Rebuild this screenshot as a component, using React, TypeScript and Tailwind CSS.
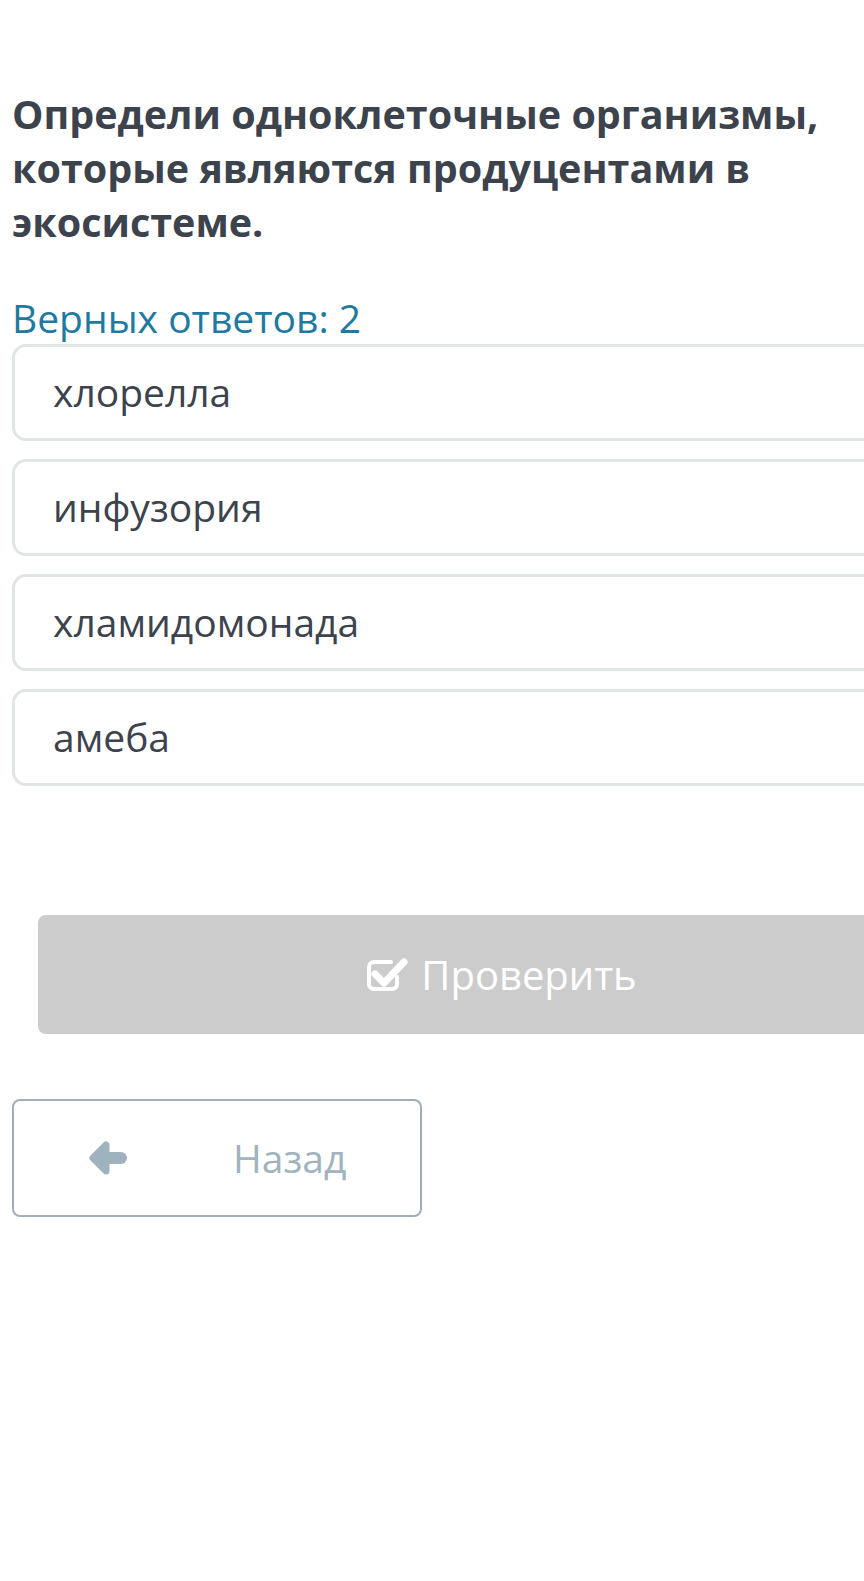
import React from "react";

const CheckIcon = () => (
  <svg width="42" height="34" viewBox="0 0 42 34" fill="none">
    <path d="M30 19v7a5 5 0 0 1-5 5H7a5 5 0 0 1-5-5V9a5 5 0 0 1 5-5h17" stroke="#ffffff" strokeWidth="4" strokeLinecap="round" />
    <path d="M8 16l9 9L37 4" stroke="#ffffff" strokeWidth="7" strokeLinecap="round" strokeLinejoin="round" />
  </svg>
);

const ArrowLeft = () => (
  <svg width="42" height="36" viewBox="0 0 42 36" fill="#9fb3bf">
    <path d="M6 18L19 5L19 31Z" stroke="#9fb3bf" strokeWidth="7" strokeLinejoin="round" />
    <rect x="14" y="12" width="26" height="12" rx="6" />
  </svg>
);

export default function App() {
  const options = ["хлорелла", "инфузория", "хламидомонада", "амеба"];
  return (
    <div className="w-[864px] h-[1581px] overflow-hidden bg-white" style={{ fontFamily: '"Open Sans", "Noto Sans", sans-serif' }}>
      <div className="w-[1004px] px-[12px] pt-[87px]">
        <h1 className="text-[39.5px] leading-[54px] font-bold text-[#3c434d] w-[830px]">
          Определи одноклеточные организмы, которые являются продуцентами в экосистеме.
        </h1>
        <div className="mt-[46px] text-[39px] leading-[46px] text-[#1e7aa0]">Верных ответов: 2</div>
        <div className="flex flex-col gap-[18px] mt-[3px]">
          {options.map((o) => (
            <div key={o} className="h-[97px] rounded-[14px] border-[3px] border-[#e2e5e5] flex items-center pl-[38px] text-[39px] text-[#3c434d]">
              {o}
            </div>
          ))}
        </div>
        <div className="mt-[129px] ml-[26px] mr-[26px] h-[119px] rounded-[8px] bg-[#cccccc] flex items-center justify-center gap-[12px] text-[40px] text-white">
          <CheckIcon />
          <span>Проверить</span>
        </div>
        <div className="mt-[65px] w-[410px] h-[118px] rounded-[8px] border-2 border-[#9fb0b9] flex items-center text-[39px] text-[#a0b3be]">
          <div className="ml-[73px]"><ArrowLeft /></div>
          <span className="ml-[104px]">Назад</span>
        </div>
      </div>
    </div>
  );
}
